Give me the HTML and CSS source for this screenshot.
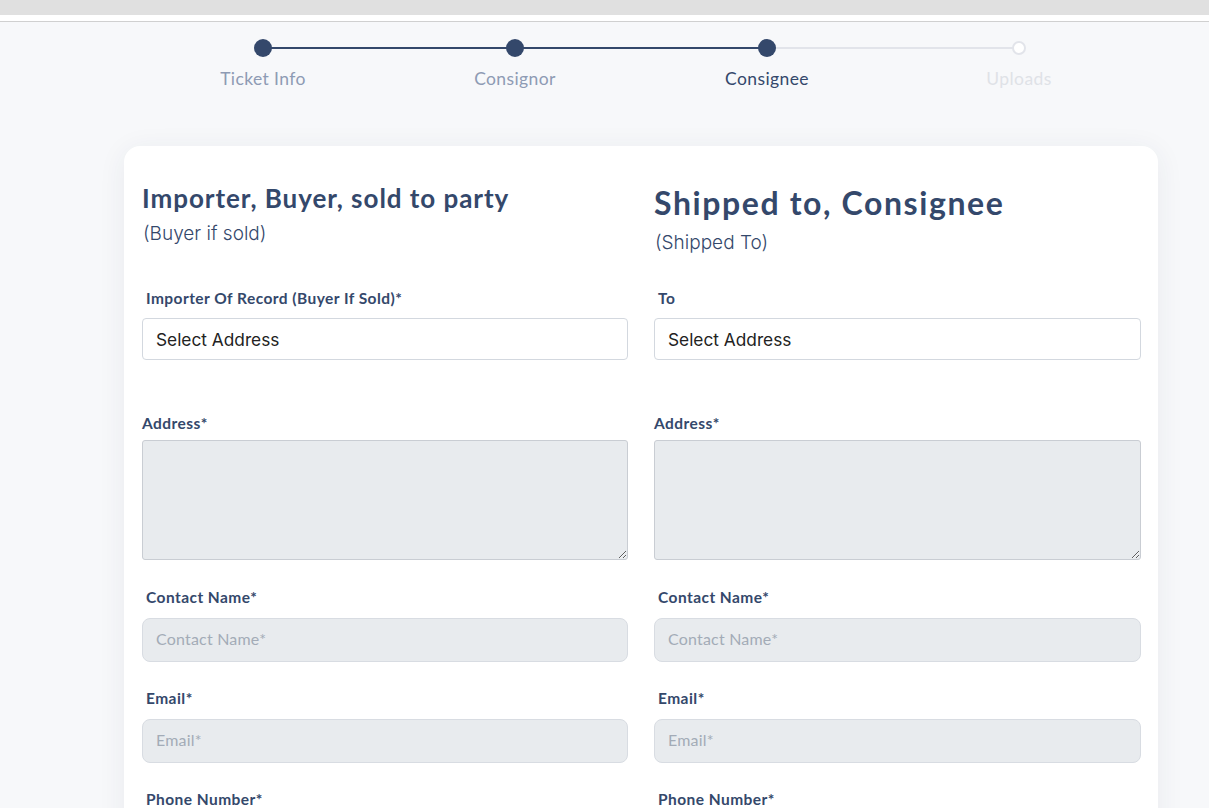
FILE: index.html
```html
<!DOCTYPE html>
<html>
<head>
<meta charset="utf-8">
<link rel="stylesheet" href="styles.css">
</head>
<body>
<div class="topbar"></div>
<div class="main">
  <div class="stepper">
    <div class="step done"><span class="dot"></span><span class="step-label">Ticket Info</span></div>
    <div class="step done"><span class="dot"></span><span class="step-label">Consignor</span></div>
    <div class="step current"><span class="dot"></span><span class="step-label">Consignee</span></div>
    <div class="step todo"><span class="dot"></span><span class="step-label">Uploads</span></div>
  </div>

  <div class="card">
    <div class="grid">
      <div class="head">
        <h2 class="title-sm">Importer, Buyer, sold to party</h2>
        <div class="sub sub-sm">(Buyer if sold)</div>
      </div>
      <div class="head">
        <h2 class="title-lg">Shipped to, Consignee</h2>
        <div class="sub sub-lg">(Shipped To)</div>
      </div>

      <div class="field select-field">
        <label class="label">Importer Of Record (Buyer If Sold)*</label>
        <div class="select">Select Address</div>
      </div>
      <div class="field select-field">
        <label class="label">To</label>
        <div class="select">Select Address</div>
      </div>

      <div class="field area-field">
        <label class="label flush">Address*</label>
        <textarea class="textarea" disabled></textarea>
      </div>
      <div class="field area-field">
        <label class="label flush">Address*</label>
        <textarea class="textarea" disabled></textarea>
      </div>

      <div class="field">
        <label class="label">Contact Name*</label>
        <input class="input" placeholder="Contact Name*" disabled>
      </div>
      <div class="field">
        <label class="label">Contact Name*</label>
        <input class="input" placeholder="Contact Name*" disabled>
      </div>

      <div class="field">
        <label class="label">Email*</label>
        <input class="input" placeholder="Email*" disabled>
      </div>
      <div class="field">
        <label class="label">Email*</label>
        <input class="input" placeholder="Email*" disabled>
      </div>

      <div class="field">
        <label class="label">Phone Number*</label>
        <input class="input" placeholder="Phone Number*" disabled>
      </div>
      <div class="field">
        <label class="label">Phone Number*</label>
        <input class="input" placeholder="Phone Number*" disabled>
      </div>
    </div>
  </div>
</div>
</body>
</html>
```

FILE: styles.css
```css
* { box-sizing: border-box; }
html, body { margin: 0; padding: 0; }
body {
  background: #f7f8fa;
  font-family: "Lato", "Noto Sans", sans-serif;
  color: #34486b;
  height: 808px;
  overflow: hidden;
}
.topbar {
  height: 22px;
  background: #ffffff;
  border-top: 15px solid #e0e0e0;
  border-bottom: 1px solid #d0d0d0;
}
.main {
  margin-left: 124px;
  width: 1034px;
}
.stepper {
  display: grid;
  grid-template-columns: repeat(4, 1fr);
  padding: 17px 13px 0;
}
.step {
  position: relative;
  display: flex;
  flex-direction: column;
  align-items: center;
}
.step::after {
  content: "";
  position: absolute;
  top: 8px;
  left: 50%;
  width: 100%;
  height: 2px;
  background: #34486b;
  z-index: 0;
}
.step.current::after { background: #e2e4ea; }
.step.todo::after { display: none; }
.dot {
  position: relative;
  z-index: 1;
  width: 18px;
  height: 18px;
  border-radius: 50%;
  background: #34486b;
}
.todo .dot {
  width: 14px;
  height: 14px;
  margin: 2px 0;
  background: #fff;
  border: 2px solid #e2e4ea;
}
.step-label {
  margin-top: 11px;
  font-size: 17.5px;
  line-height: 22px;
  letter-spacing: 0.4px;
  color: #8e9bb4;
}
.current .step-label { color: #34486b; }
.todo .step-label { color: #dfe2e7; }

.card {
  margin-top: 56px;
  background: #fff;
  border-radius: 16px;
  box-shadow: 0 4px 28px rgba(40, 50, 80, 0.07);
  padding: 30px 17px 40px 18px;
  height: 700px;
}
.grid {
  display: grid;
  grid-template-columns: 486px 487px;
  column-gap: 26px;
}
.head { padding-bottom: 33px; }
.title-sm {
  margin: 6px 0 0;
  font-size: 26px;
  line-height: 32px;
  font-weight: 700;
  letter-spacing: 0.95px;
}
.title-lg {
  margin: 9px 0 0;
  font-size: 32px;
  line-height: 36px;
  font-weight: 700;
  letter-spacing: 1.6px;
}
.sub {
  font-family: "Inter", "Noto Sans", sans-serif;
  font-weight: 300;
  font-size: 19px;
  line-height: 24px;
  padding-left: 1px;
}
.sub-sm { margin-top: 8px; }
.sub-lg { margin-top: 10px; }

.field {
  display: flex;
  flex-direction: column;
  margin-bottom: 26px;
}
.area-field { margin-bottom: 27px; }
.label {
  font-size: 15.5px;
  line-height: 20px;
  font-weight: 700;
  letter-spacing: 0.45px;
  padding-left: 4px;
  margin-bottom: 11px;
}
.label.flush { padding-left: 0; margin-bottom: 7px; }
.select-field { margin-bottom: 53px; }
.select-field .label { margin-bottom: 10px; }
.select {
  height: 42px;
  border: 1px solid #d3d8df;
  border-radius: 4px;
  background: #fff;
  font-family: "Inter", "Noto Sans", sans-serif;
  font-size: 17.3px;
  line-height: 41px;
  padding-left: 13px;
  color: #222;
}
.textarea {
  height: 120px;
  background: #e8ebee;
  border: 1px solid #c9cdd3;
  border-radius: 3px;
  resize: vertical;
  margin: 0;
}
.input {
  height: 44px;
  background: #e8ebee;
  border: 1px solid #d8dce2;
  border-radius: 8px;
  padding: 0 13px 3px;
  font-family: "Lato", "Noto Sans", sans-serif;
  font-size: 16px;
  letter-spacing: 0.2px;
  margin: 0;
}
.input::placeholder { color: #a3abb7; }
```
